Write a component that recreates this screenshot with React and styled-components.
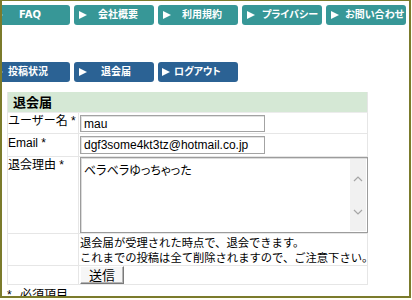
import React from "react";
import styled, { createGlobalStyle } from "styled-components";

const Global = createGlobalStyle`
  html, body { margin: 0; padding: 0; background: #fffff6; }
  body {
    font-family: "Liberation Sans", "Noto Sans CJK JP", sans-serif;
    font-size: 12px;
    color: #000;
  }
`;

const Frame = styled.div`
  box-sizing: border-box;
  width: 411px;
  height: 298px;
  border: 2px solid #7b7b2b;
  border-top-width: 1px;
  background: #fff;
  overflow: hidden;
`;

const Nav = styled.nav`
  display: flex;
  gap: 4px;
  margin-left: -12px;
  margin-top: ${(p) => p.$top}px;
`;

const NavButton = styled.a`
  box-sizing: border-box;
  flex: none;
  width: 80px;
  height: 20px;
  display: flex;
  align-items: center;
  padding-left: ${(p) => p.$arrow}px;
  border-radius: 3px;
  background: ${(p) => p.$color};
  color: #fff;
  font: bold 10px "DejaVu Sans", "Noto Sans CJK JP", sans-serif;
  font-feature-settings: "palt";
  text-decoration: none;
  white-space: nowrap;
`;

const NavLabel = styled.span`
  margin-left: ${(p) => p.$indent}px;
  line-height: 20px;
`;

const Arrow = () => (
  <svg width="8" height="8" viewBox="0 0 8 8" style={{ flex: "none" }}>
    <polygon points="0,0 8,4 0,8" fill="#fff" />
  </svg>
);

const Form = styled.form`
  margin: 10px 0 0 5px;
  width: 361px;
  border-left: 1px solid #e6e6e6;
  display: grid;
  grid-template-columns: 71px 289px;
`;

const Heading = styled.div`
  grid-column: 1 / -1;
  box-sizing: border-box;
  height: 21px;
  padding-left: 5px;
  background: #d5e8d5;
  border-bottom: 1px solid #ececec;
  border-right: 1px solid #e6e6e6;
  font: bold 13px "Noto Sans CJK JP", sans-serif;
  line-height: 20px;
`;

const LabelCell = styled.div`
  box-sizing: border-box;
  height: ${(p) => p.$h + 1}px;
  border-right: 1px solid #e6e6e6;
  border-bottom: 1px solid #e6e6e6;
  padding-top: ${(p) => p.$pt || 0}px;
  font-size: 12px;
  line-height: 17px;
  white-space: nowrap;
`;

const FieldCell = styled.div`
  box-sizing: border-box;
  height: ${(p) => p.$h + 1}px;
  border-right: 1px solid #e6e6e6;
  border-bottom: 1px solid #e6e6e6;
  padding-top: ${(p) => p.$pt || 0}px;
  padding-left: 1px;
`;

const TextInput = styled.input`
  box-sizing: border-box;
  display: block;
  width: 185px;
  height: ${(p) => p.$h}px;
  margin: 0;
  padding: 0 0 0 3px;
  border: 1px solid #a3a3a3;
  box-shadow: inset 1px 1px 0 #e2e2e2;
  font: 12px "Liberation Sans", "Noto Sans CJK JP", sans-serif;
  color: #000;
  background: #fff;
  outline: none;
`;

const AreaBox = styled.div`
  box-sizing: border-box;
  display: flex;
  width: 288px;
  height: 76px;
  border: 1px solid #9c9c9c;
  box-shadow: inset 1px 1px 0 #dcdcdc;
  background: #fff;
`;

const Area = styled.textarea`
  flex: 1;
  margin: 0;
  padding: 4px 0 0 3px;
  border: none;
  resize: none;
  overflow: hidden;
  background: transparent;
  font: 12px "Noto Sans CJK JP", sans-serif;
  font-feature-settings: "palt";
  line-height: 16px;
  color: #000;
  outline: none;
`;

const ScrollTrack = styled.div`
  flex: none;
  width: 16px;
  margin: 1px 1px 1px 0;
  background: #f1f1f1;
  display: flex;
  flex-direction: column;
  align-items: center;
  justify-content: space-between;
  padding: 17px 0 16px;
  box-sizing: border-box;
`;

const Chevron = ({ up }) => (
  <svg width="10" height="6" viewBox="0 0 10 6">
    <polyline
      points={up ? "1,5 5,1 9,5" : "1,1 5,5 9,1"}
      fill="none"
      stroke="#a6a6a6"
      strokeWidth="1.2"
    />
  </svg>
);

const Note = styled.p`
  margin: 0;
  font: 11.3px "Noto Sans CJK JP", sans-serif;
  line-height: 15px;
  white-space: nowrap;
`;

const Submit = styled.button`
  box-sizing: border-box;
  display: block;
  width: 44px;
  height: 18px;
  margin: 0;
  padding: 0;
  background: #f6f6f6;
  border: 1px solid;
  border-color: #fff #7a7a7a #7a7a7a #fff;
  box-shadow: inset -1px -1px 0 #b5b5b5;
  font: 13px "Noto Sans CJK JP", sans-serif;
  line-height: 16px;
  color: #000;
`;

const Footer = styled.div`
  margin: 2px 0 0 5px;
  font-size: 12px;
  line-height: 17px;
  word-spacing: 5px;
  white-space: nowrap;
`;

const topLinks = [
  { label: "FAQ", indent: 16 },
  { label: "会社概要", indent: 11 },
  { label: "利用規約", indent: 11 },
  { label: "プライバシー", indent: 7 },
  { label: "お問い合わせ", indent: 6 },
];

const subLinks = [
  { label: "投稿状況", indent: 5, arrow: 5 },
  { label: "退会届", indent: 14, arrow: 5 },
  { label: "ログアウト", indent: 4, arrow: 4 },
];

export default function App() {
  return (
    <>
      <Global />
      <Frame>
        <Nav $top={4}>
          {topLinks.map((l) => (
            <NavButton key={l.label} $color="#379797" $arrow={5}>
              <Arrow />
              <NavLabel $indent={l.indent}>{l.label}</NavLabel>
            </NavButton>
          ))}
        </Nav>
        <Nav $top={37}>
          {subLinks.map((l) => (
            <NavButton key={l.label} $color="#2b6294" $arrow={l.arrow}>
              <Arrow />
              <NavLabel $indent={l.indent}>{l.label}</NavLabel>
            </NavButton>
          ))}
        </Nav>
        <Form onSubmit={(e) => e.preventDefault()}>
          <Heading>退会届</Heading>

          <LabelCell $h={20}>ユーザー名 *</LabelCell>
          <FieldCell $h={20} $pt={2}>
            <TextInput $h={17} defaultValue="mau" />
          </FieldCell>

          <LabelCell $h={22} $pt={1}>Email *</LabelCell>
          <FieldCell $h={22} $pt={2}>
            <TextInput $h={18} defaultValue="dgf3some4kt3tz@hotmail.co.jp" />
          </FieldCell>

          <LabelCell $h={76}>退会理由 *</LabelCell>
          <FieldCell $h={76}>
            <AreaBox>
              <Area defaultValue="ベラベラゆっちゃった" />
              <ScrollTrack>
                <Chevron up />
                <Chevron />
              </ScrollTrack>
            </AreaBox>
          </FieldCell>

          <LabelCell $h={31} />
          <FieldCell $h={31} $pt={1}>
            <Note>退会届が受理された時点で、退会できます。</Note>
            <Note>これまでの投稿は全て削除されますので、ご注意下さい。</Note>
          </FieldCell>

          <LabelCell $h={18} />
          <FieldCell $h={18}>
            <Submit type="submit">送信</Submit>
          </FieldCell>
        </Form>
        <Footer>* 必須項目</Footer>
      </Frame>
    </>
  );
}
